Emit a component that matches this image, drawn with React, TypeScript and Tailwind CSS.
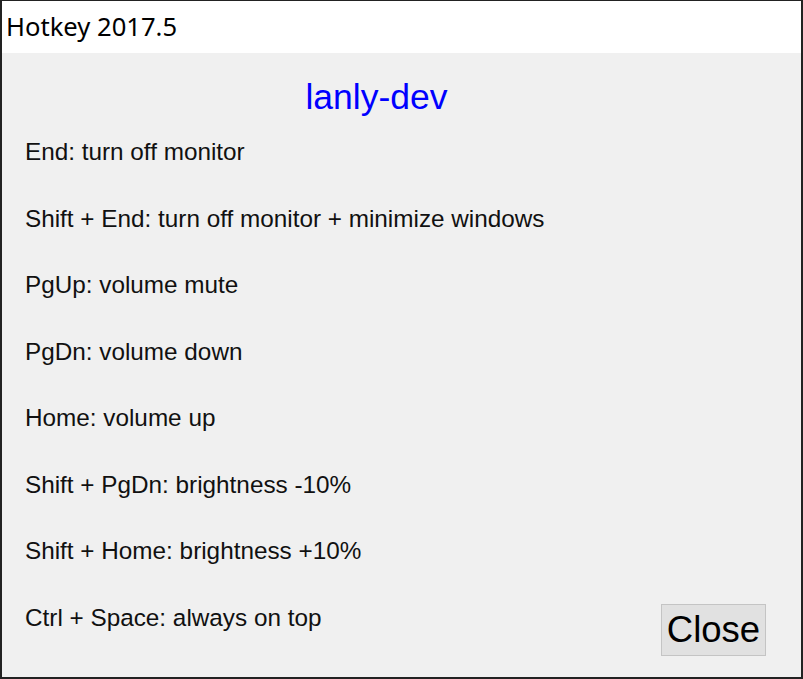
const rows = [
  "End: turn off monitor",
  "Shift + End: turn off monitor + minimize windows",
  "PgUp: volume mute",
  "PgDn: volume down",
  "Home: volume up",
  "Shift + PgDn: brightness -10%",
  "Shift + Home: brightness +10%",
];

export default function App() {
  return (
    <div className="w-[803px] h-[679px] bg-[#222222] pt-px pl-[2px] pr-[2px] pb-[2px] flex flex-col">
      {/* title bar */}
      <div className="h-[52px] bg-white flex items-center pl-[4px] text-[25.6px] text-black font-['Noto_Sans',sans-serif]">
        Hotkey 2017.5
      </div>

      <div className="flex-1 bg-[#f0f0f0] flex flex-col font-['Liberation_Sans',Arial,sans-serif] text-[#111]">
        <div className="pt-[24px] pr-[50px] flex justify-center text-[35.5px] leading-[40px] text-[#0000ff]">
          lanly-dev
        </div>
        <div className="mt-[2px] pl-[23px] flex flex-col text-[24.3px] leading-[66.57px]">
          {rows.map((r) => (
            <div key={r}>{r}</div>
          ))}
          <div className="flex justify-between items-start pr-[35px]">
            <div>Ctrl + Space: always on top</div>
            <button className="mt-[19px] w-[105px] h-[52px] bg-[#e1e1e1] border border-[#c4c4c4] text-black text-[36.5px] leading-none">
              Close
            </button>
          </div>
        </div>
      </div>
    </div>
  );
}
